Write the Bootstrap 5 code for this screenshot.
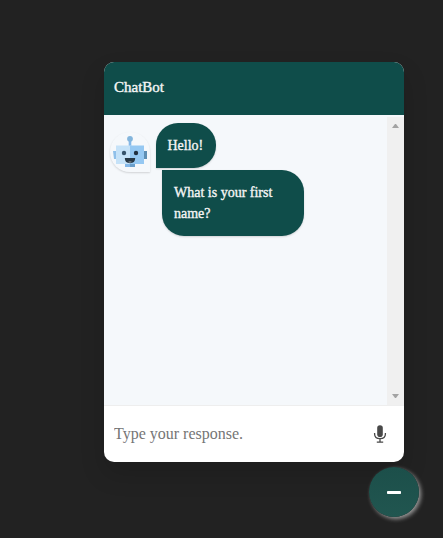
<!DOCTYPE html>
<html lang="en">
<head>
<meta charset="utf-8">
<meta name="viewport" content="width=device-width, initial-scale=1">
<title>ChatBot</title>
<link href="https://cdn.jsdelivr.net/npm/bootstrap@5.3.0/dist/css/bootstrap.min.css" rel="stylesheet">
<style>
body{background:#222;font-family:"Liberation Serif","Times New Roman",serif;height:538px;padding:62px 23px 0 104px}
.chat-window{width:300px;height:400px;border-radius:10px;background:#fff;box-shadow:0 12px 24px rgba(0,0,0,.15)}
.chat-head{height:53px;padding:0 10px 2px;background:#0f4d4a;color:#f5f5f5;font-size:15px;-webkit-text-stroke:.4px #f5f5f5}
.chat-body{background:#f5f8fb}
.chat-log{padding:8px 0 0 6px}
.first-row{height:45px}
.bot-avatar{width:40px;height:40px;margin:9px 6px 0 0;border-radius:50% 50% 0 50%;box-shadow:rgba(0,0,0,.15) 0 1px 2px;padding:3px}
.bubble{background:#0f4d4a;color:#f5f5f5;font-size:14px;line-height:21px;padding:12px;border-radius:22px;box-shadow:rgba(0,0,0,.15) 0 1px 2px;-webkit-text-stroke:.35px #f5f5f5}
.bubble-first{width:60px;height:45px;padding-left:11.5px;border-bottom-left-radius:0}
.bubble-next{width:142px;height:66px;margin:2px 0 0 52px;border-top-left-radius:0}
.scroll-track{width:17px;margin-top:2px;padding:7px 0;background:#f0f0f0}
.chat-foot{height:57px;border-top:1px solid #eee;padding:0 17px 0 10px}
.chat-input{font-family:inherit;font-size:16px;color:#212529}
.chat-input::placeholder{color:#757575;opacity:1}
.toggle-btn{width:50px;height:50px;margin:5px 1px 0 0;background:linear-gradient(#1c4f4a,#215650);box-shadow:2px 2px 4px #999}
</style>
<script src="https://cdn.jsdelivr.net/npm/bootstrap@5.3.0/dist/js/bootstrap.bundle.min.js"></script>
</head>
<body class="overflow-hidden">
<main class="chat-window d-flex flex-column overflow-hidden">
  <header class="chat-head d-flex align-items-center"><span>ChatBot</span></header>
  <section class="chat-body d-flex flex-grow-1">
    <div class="chat-log flex-grow-1">
      <div class="first-row d-flex align-items-start">
        <div class="bot-avatar flex-shrink-0">
          <svg class="d-block" width="34" height="34" viewBox="0 0 34 34" aria-hidden="true">
            <path fill="#8fc0ea" d="M0 16h4v8H1zM30 16h4v8h-4z"/>
            <path fill="#5f8fb4" d="M31 16h3v8h-3z"/>
            <path fill="#83b7e8" d="M12 29h10v3H12z"/>
            <path fill="#6a9fcb" d="M17 29h5v3h-5z"/>
            <path fill="#83b7e8" d="M15.700 5h2.600v7h-2.600z"/>
            <circle cx="17" cy="3.8" r="2.9" fill="#83b5dc"/>
            <path fill="#c5e2f8" d="M3 10.500h15v18.500H3z"/>
            <path fill="#95c8f2" d="M17 10.500h14v18.500H17z"/>
            <circle cx="11" cy="18" r="2.2" fill="#36536b"/><circle cx="23" cy="18" r="2.2" fill="#203040"/>
            <path fill="#263745" d="M11.800 23h10.400q0 5.200-5.200 5.200t-5.200-5.200"/>
            <path fill="#6b747c" d="M15 27q2-2 4 0l-2 1z"/>
          </svg>
        </div>
        <div class="bubble bubble-first">Hello!</div>
      </div>
      <div class="bubble bubble-next">What is your first name?</div>
    </div>
    <div class="scroll-track d-flex flex-column justify-content-between align-items-center">
      <svg width="7" height="4" viewBox="0 0 7 4"><path fill="#a3a3a3" d="M0 4h7L4 0H3z"/></svg>
      <svg width="7" height="4" viewBox="0 0 7 4"><path fill="#a3a3a3" d="M0 0h7L4 4H3z"/></svg>
    </div>
  </section>
  <footer class="chat-foot d-flex align-items-center">
    <input class="chat-input form-control border-0 p-0 shadow-none" type="text" placeholder="Type your response." aria-label="Response">
    <svg class="flex-shrink-0" width="14" height="18" viewBox="0 0 14 18" aria-hidden="true">
      <rect x="4.2" y=".3" width="5.6" height="11.7" rx="2.8" fill="#484848"/>
      <path d="M1.6 8v1q0 4.5 5.4 4.7Q12.4 13.5 12.4 9V8M7 13.5v3.4M3.8 17.2h6.400" fill="none" stroke="#484848" stroke-width="1.3"/>
    </svg>
  </footer>
</main>
<div class="d-flex justify-content-end">
  <button class="toggle-btn btn border-0 rounded-circle p-0 d-flex align-items-center justify-content-center" aria-label="Minimize">
    <svg width="14" height="3" viewBox="0 0 14 3"><rect width="14" height="3" rx=".8" fill="#fff"/></svg>
  </button>
</div>
</body>
</html>
